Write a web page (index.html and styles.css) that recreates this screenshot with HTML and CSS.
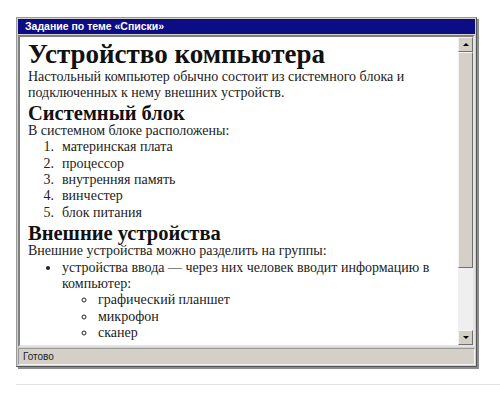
FILE: index.html
```html
<!DOCTYPE html>
<html lang="ru">
<head>
    <meta charset="UTF-8">
    <title>Задание по теме «Списки»</title>
    <link rel="stylesheet" href="styles.css">
</head>
<body>
    <div class="window">
        <div class="titlebar">Задание по теме «Списки»</div>
        <div class="viewport">
            <div class="doc">
                <h1>Устройство компьютера</h1>
                <p>Настольный компьютер обычно состоит из системного блока и подключенных к нему внешних устройств.</p>
                <h2>Системный блок</h2>
                <p>В системном блоке расположены:</p>
                <ol>
                    <li>материнская плата</li>
                    <li>процессор</li>
                    <li>внутренняя память</li>
                    <li>винчестер</li>
                    <li>блок питания</li>
                </ol>
                <h2>Внешние устройства</h2>
                <p>Внешние устройства можно разделить на группы:</p>
                <ul>
                    <li>устройства ввода — через них человек вводит информацию в компьютер:
                        <ul>
                            <li>графический планшет</li>
                            <li>микрофон</li>
                            <li>сканер</li>
                        </ul>
                    </li>
                </ul>
            </div>
            <div class="scrollbar">
                <div class="sb-btn"><span class="arrow-up"></span></div>
                <div class="sb-track">
                    <div class="sb-thumb"></div>
                </div>
                <div class="sb-btn"><span class="arrow-down"></span></div>
            </div>
        </div>
        <div class="statusbar">Готово</div>
    </div>
    <div class="rule"></div>
</body>
</html>
```

FILE: styles.css
```css
body {
    margin: 0;
    background: #ffffff;
    font-family: "Liberation Serif", "Times New Roman", serif;
    color: #222;
}
.window {
    margin: 17px 0 0 16px;
    width: 459px;
    border: 1px solid #9a9a9a;
    border-right-color: #555;
    border-bottom-color: #555;
    box-shadow: 2px 2px 0 #8c8c8c;
    background: #d4d0c8;
    display: flex;
    flex-direction: column;
}
.titlebar {
    background: #0c0c84;
    color: #fff;
    font-family: "Liberation Sans", Arial, sans-serif;
    font-weight: bold;
    font-size: 10.5px;
    height: 15px;
    line-height: 15px;
    padding-left: 7px;
    margin: 1px 1px 0 1px;
}
.viewport {
    display: flex;
    height: 308px;
    margin: 1px 1px 0 1px;
    border: 2px solid #808080;
    border-right-color: #e4e4e4;
    border-bottom-color: #e4e4e4;
    background: #fff;
}
.doc {
    flex: 1;
    overflow: hidden;
    padding: 3px 8px 0 8px;
    font-size: 14px;
    line-height: 16.4px;
}
h1 {
    font-size: 27px;
    line-height: 29px;
    margin: 0;
    color: #111;
}
h2 {
    font-size: 20.5px;
    line-height: 20px;
    margin: 1px 0 0 0;
    color: #111;
}
p {
    margin: 0;
}
ol, ul {
    margin: 0;
    padding-left: 33px;
}
ol {
    margin-bottom: 2px;
}
ol li::marker {
    content: counter(list-item) ".\2002";
}
ul ul {
    padding-left: 35px;
    list-style-type: circle;
}
li {
    padding-left: 1px;
}
.scrollbar {
    width: 15px;
    display: flex;
    flex-direction: column;
    background: #ececec;
}
.sb-btn {
    height: 13px;
    background: #d4d0c8;
    border: 1px solid #f4f4f4;
    border-right-color: #707070;
    border-bottom-color: #707070;
    display: flex;
    align-items: center;
    justify-content: center;
}
.arrow-up {
    border-left: 3px solid transparent;
    border-right: 3px solid transparent;
    border-bottom: 3px solid #000;
}
.arrow-down {
    border-left: 3px solid transparent;
    border-right: 3px solid transparent;
    border-top: 3px solid #000;
}
.sb-track {
    flex: 1;
    background: #efefef;
}
.sb-thumb {
    height: 216px;
    background: #d4d0c8;
    border: 1px solid #f4f4f4;
    border-right-color: #707070;
    border-bottom-color: #707070;
    box-sizing: border-box;
}
.statusbar {
    height: 15px;
    line-height: 15px;
    margin: 1px;
    padding-left: 4px;
    border: 1px solid #9a9a9a;
    border-right-color: #f4f4f4;
    border-bottom-color: #f4f4f4;
    font-family: "Liberation Sans", Arial, sans-serif;
    font-size: 10px;
    color: #222;
}
.rule {
    margin: 17px 0 0 16px;
    height: 1px;
    background: #e2e2e2;
}
```
